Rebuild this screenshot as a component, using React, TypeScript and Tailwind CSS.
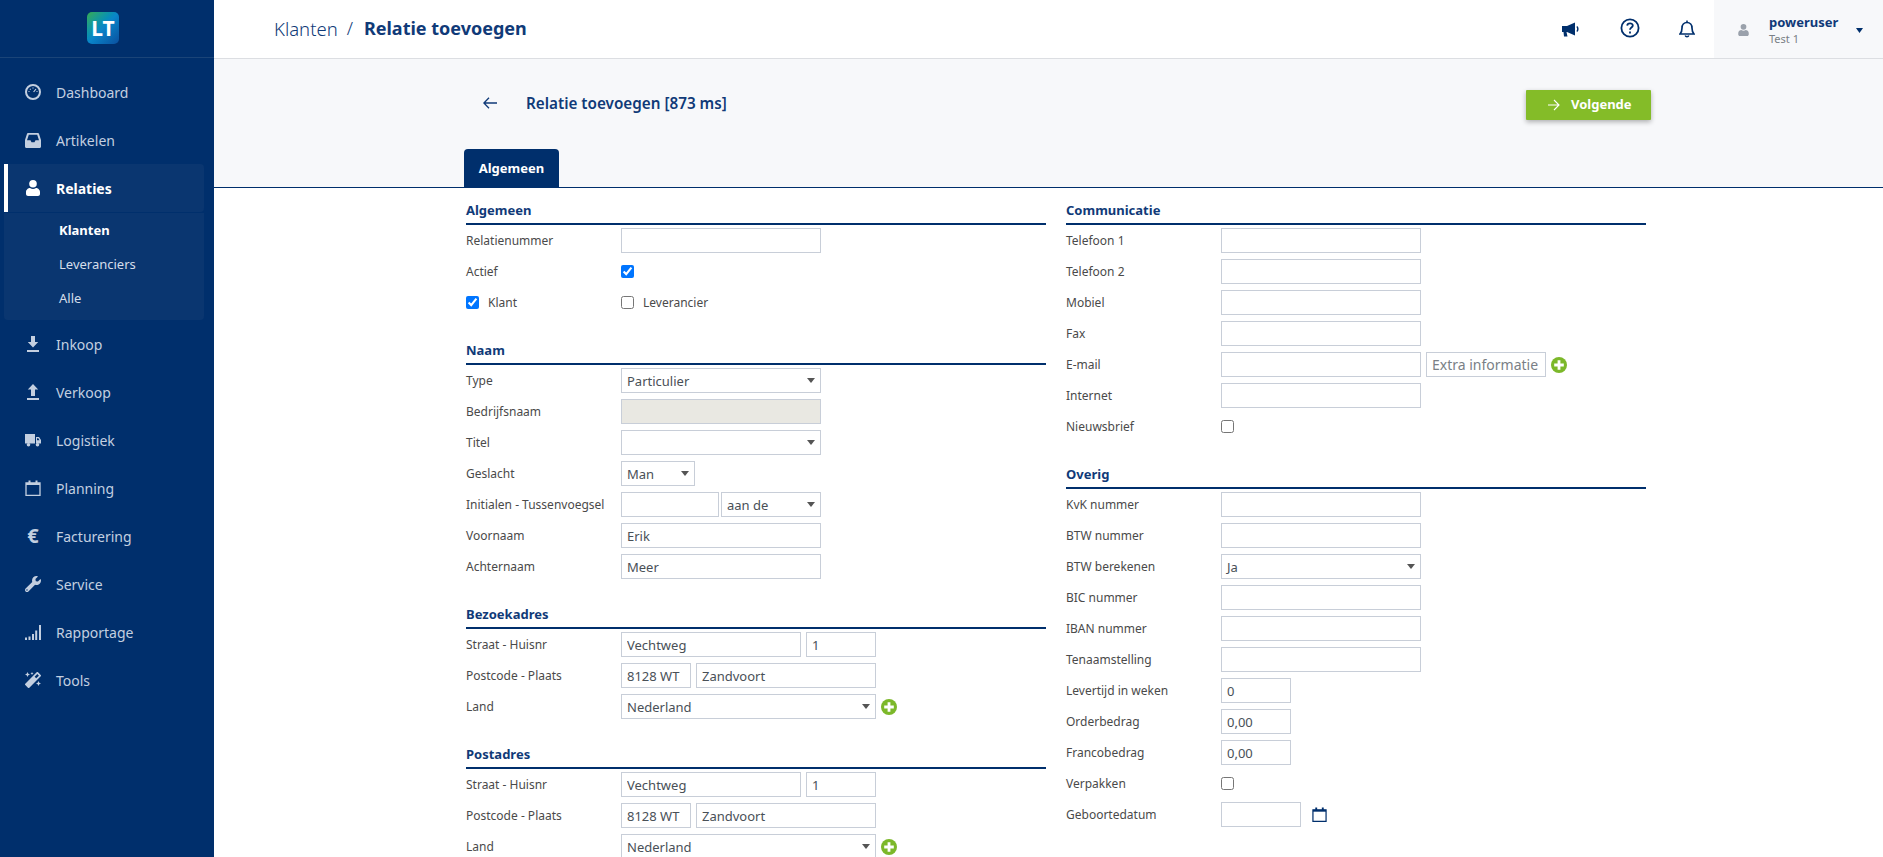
import React from "react";
import { FaWrench, FaMagic } from "react-icons/fa";

const font = "[font-family:'Noto_Sans','Open_Sans',sans-serif]";

const IconDash = () => (
  <svg width="16" height="16" viewBox="0 0 16 16" fill="none" stroke="currentColor">
    <circle cx="8" cy="8" r="7" strokeWidth="2" />
    <path d="M3.500 7.500h1M11.500 7.500h1M8 3.500v1M5 5l.6.6M11 5l-2.400 3" strokeWidth="1.200" />
  </svg>
);
const IconInbox = () => (
  <svg width="16" height="15" viewBox="0 0 16 15" fill="currentColor" fillRule="evenodd">
    <path d="M3 0h10c.4 0 .7.2.9.6L16 7v6.500c0 .8-.6 1.500-1.500 1.500h-13C.6 15 0 14.300 0 13.500V7L2.100.6C2.300.2 2.600 0 3 0zM3.800 1.800L2 7.300h3.500l1 2h3l1-2H14l-1.800-5.500z" />
  </svg>
);
const IconUser = ({ w, h }: { w: number; h: number }) => (
  <svg width={w} height={h} viewBox="0 0 14 16" fill="currentColor">
    <circle cx="7" cy="3.800" r="3.800" />
    <path d="M0 12c0-2.500 2.500-4 4-4 1 .7 2 1 3 1s2-.3 3-1c1.500 0 4 1.500 4 4v2c0 1.200-1 2-2 2H2c-1 0-2-.8-2-2z" />
  </svg>
);
const IconTruck = () => (
  <svg width="16" height="13" viewBox="0 0 16 13" fill="currentColor" fillRule="evenodd">
    <path d="M0 0h10v9.500H0zM11 3h3l2 3v3.500h-5zM12 4.200v2h2.500L13.300 4.200z" />
    <circle cx="3.500" cy="10.800" r="1.800" />
    <circle cx="12.500" cy="10.800" r="1.800" />
  </svg>
);
const IconDown = () => (
  <svg width="16" height="16" viewBox="0 0 16 16" fill="currentColor">
    <path d="M6 0h4v6h3.200L8 11.400 2.800 6H6zM2 14h12v2H2z" />
  </svg>
);
const IconUp = () => (
  <svg width="16" height="16" viewBox="0 0 16 16" fill="currentColor">
    <path d="M8 0l5.200 5.600H10v6.400H6V5.600H2.800zM2 14h12v2H2z" />
  </svg>
);
const IconCal = ({ s = 16 }: { s?: number }) => (
  <svg width={s} height={s} viewBox="0 0 16 16" fill="none" stroke="currentColor">
    <path d="M1 3h14v12.300H1z" strokeWidth="1.300" />
    <path d="M1 4h14" strokeWidth="2" />
    <path d="M4.500 .5v3M11.500 .5v3" strokeWidth="2" />
  </svg>
);
const IconBars = () => (
  <svg width="16" height="16" viewBox="0 0 16 16" fill="currentColor">
    <path d="M0 13.500h2V16H0zM3.500 12.500h2V16h-2zM7 10h2v6H7zM10.200 6.500h2V16h-2zM14 1h2v15h-2z" />
  </svg>
);
const Plus = () => (
  <svg width="16" height="16" viewBox="0 0 16 16" className="shrink-0">
    <circle cx="8" cy="8" r="8" fill="#7cb82a" />
    <path d="M6.600 3.200h2.800v3.400h3.400v2.800H9.400v3.400H6.600V9.400H3.200V6.600h3.400z" fill="#fff" />
  </svg>
);
const Caret = () => (
  <svg width="8" height="5" viewBox="0 0 8 5" className="absolute right-[5px] top-[9px]" fill="#555">
    <path d="M0 0h8L4 5z" />
  </svg>
);

type Item = { label: string; icon: React.ReactNode };
const top: Item[] = [
  { label: "Dashboard", icon: <IconDash /> },
  { label: "Artikelen", icon: <IconInbox /> },
];
const rest: Item[] = [
  { label: "Inkoop", icon: <IconDown /> },
  { label: "Verkoop", icon: <IconUp /> },
  { label: "Logistiek", icon: <IconTruck /> },
  { label: "Planning", icon: <IconCal /> },
  { label: "Facturering", icon: <span className="text-[20px] font-bold leading-none">€</span> },
  { label: "Service", icon: <FaWrench size={16} /> },
  { label: "Rapportage", icon: <IconBars /> },
  { label: "Tools", icon: <FaMagic size={16} /> },
];

const NavRow = ({ item }: { item: Item }) => (
  <div className="flex h-[48px] items-center pl-[25px] text-[14px] text-[#c3cfe0]">
    <span className="flex w-[16px] justify-center">{item.icon}</span>
    <span className="ml-[15px]">{item.label}</span>
  </div>
);

const Input = ({ w, value, placeholder, disabled }: { w: string; value?: string; placeholder?: string; disabled?: boolean }) => (
  <input
    defaultValue={value}
    placeholder={placeholder}
    disabled={disabled}
    className={`${w} h-[25px] border border-[#c8ced8] px-[5px] text-[13px] text-[#495057] outline-none placeholder:text-[14px] placeholder:text-[#7a7f86] disabled:bg-[#e9e8e2] ${font}`}
  />
);

const Select = ({ w, value }: { w: string; value: string }) => (
  <div className={`${w} relative h-[25px] border border-[#c8ced8] bg-white px-[5px] text-[13px] leading-[25px] text-[#495057]`}>
    {value}
    <Caret />
  </div>
);

const Row = ({ label, children }: { label: string; children?: React.ReactNode }) => (
  <div className="flex h-[25px] items-center">
    <span className="w-[155px] shrink-0 pt-[1px] text-[12px] text-[#4a4a4a]">{label}</span>
    {children}
  </div>
);

const Section = ({ title, children }: { title: string; children: React.ReactNode }) => (
  <section className="mb-[22px]">
    <h3 className="flex h-[28px] items-center border-b-2 border-[#002f6c] pt-[1px] text-[13px] font-bold text-[#103a78]">{title}</h3>
    <div className="mt-[3px] flex flex-col gap-[6px]">{children}</div>
  </section>
);

const Address = () => (
  <>
    <Row label="Straat - Huisnr">
      <div className="flex gap-[5px]">
        <Input w="w-[180px]" value="Vechtweg" />
        <Input w="w-[70px]" value="1" />
      </div>
    </Row>
    <Row label="Postcode - Plaats">
      <div className="flex gap-[5px]">
        <Input w="w-[70px]" value="8128 WT" />
        <Input w="w-[180px]" value="Zandvoort" />
      </div>
    </Row>
    <Row label="Land">
      <div className="flex items-center gap-[5px]">
        <Select w="w-[255px]" value="Nederland" />
        <Plus />
      </div>
    </Row>
  </>
);

export default function App() {
  return (
    <div className={`flex h-screen w-full overflow-hidden bg-white ${font}`}>
      <aside className="h-full w-[214px] shrink-0 bg-[#002f6c]">
        <div className="flex h-[58px] items-center justify-center border-b border-[#1a4478] pb-[1px] pr-[8px]">
          <div className="flex h-[32px] w-[32px] items-center justify-center rounded-[5px] bg-gradient-to-br from-[#37ab4b] via-[#0a85c9] to-[#0b4f9e] text-[21px] font-bold leading-none text-white">
            LT
          </div>
        </div>
        <nav className="pt-[10px]">
          {top.map((i) => (
            <NavRow key={i.label} item={i} />
          ))}
          <div className="ml-[4px] flex h-[48px] w-[200px] items-center rounded-r-[4px] border-l-[4px] border-white bg-[#0a3670] pl-[17px] text-[14px] font-bold text-white">
            <span className="flex w-[16px] justify-center">
              <IconUser w={14} h={16} />
            </span>
            <span className="ml-[15px]">Relaties</span>
          </div>
          <div className="ml-[4px] mt-[1px] h-[107px] w-[200px] rounded-b-[4px] bg-[#0a3670] pt-[1px] text-[13px] text-[#d5deea]">
            <div className="flex h-[34px] items-center pl-[55px] font-bold text-white">Klanten</div>
            <div className="flex h-[34px] items-center pl-[55px]">Leveranciers</div>
            <div className="flex h-[34px] items-center pl-[55px]">Alle</div>
          </div>
          {rest.map((i) => (
            <NavRow key={i.label} item={i} />
          ))}
        </nav>
      </aside>

      <main className="flex h-full min-w-0 flex-1 flex-col">
        <header className="flex h-[59px] shrink-0 items-center justify-between border-b border-[#dcdee2] pl-[60px]">
          <div className="flex items-center pb-[1px] text-[18px] text-[#103a78]">
            <span className="text-[18.500px] font-light">Klanten</span>
            <span className="ml-[9px] mr-[11px] font-light">/</span>
            <span className="font-bold">Relatie toevoegen</span>
          </div>
          <div className="flex h-full items-center">
            <svg width="18" height="15" viewBox="0 0 18 15" className="text-[#002f6c]" fill="currentColor">
              <path d="M0 4h5L13 .5v13L5 10h-.5l1 4.500H2L1.500 10H0z" />
              <path d="M14.800 4.500c1.400 1 1.400 4 0 5" fill="none" stroke="currentColor" strokeWidth="1.500" />
            </svg>
            <svg width="20" height="20" viewBox="0 0 20 20" fill="none" stroke="#002f6c" className="ml-[40px] mb-[3px]">
              <circle cx="10" cy="10" r="8.600" strokeWidth="1.800" />
              <path d="M7.200 7.600C7.400 4.600 12.800 4.600 12.800 7.600c0 2-2.800 2-2.800 4.200" strokeWidth="1.800" />
              <path d="M10 13.400v2" strokeWidth="1.800" />
            </svg>
            <svg width="16" height="18" viewBox="0 0 16 18" fill="none" stroke="#002f6c" className="ml-[39px]">
              <path d="M1 14h14c-1.500-1.500-2-2.500-2-6 0-3-2-5.500-5-5.500S3 5 3 8c0 3.500-.5 4.500-2 6z" strokeWidth="1.700" />
              <path d="M8 .5v2M6.200 15.500c.5 1.500 3.100 1.500 3.600 0" strokeWidth="1.500" />
            </svg>
            <div className="ml-[19px] flex h-full w-[169px] items-center bg-[#f7f8fa] pl-[24px]">
              <span className="mt-[1px] text-[#9aa1ab]">
                <IconUser w={11} h={12} />
              </span>
              <div className="ml-[20px] flex flex-col pt-[4px]">
                <span className="text-[13px] font-bold leading-[16px] text-[#103a78]">poweruser</span>
                <span className="text-[11px] leading-[18px] text-[#7a7f86]">Test 1</span>
              </div>
              <svg width="7" height="5" viewBox="0 0 7 5" fill="#002f6c" className="ml-[18px] mt-[2px]">
                <path d="M0 0h7L3.500 5z" />
              </svg>
            </div>
          </div>
        </header>

        <div className="h-[129px] shrink-0 border-b border-[#002f6c] bg-[#f7f8fa] pl-[250px] pt-[31px]">
          <div className="flex w-[1187px] items-start justify-between">
            <div className="flex h-[26px] items-center">
              <svg width="14" height="12" viewBox="0 0 14 12" fill="none" stroke="#103a78" strokeWidth="1.300" className="ml-[19px]">
                <path d="M14 6H1M6 .7L.9 6 6 11.300" />
              </svg>
              <span className="ml-[29px] text-[15.250px] font-semibold text-[#103a78]">Relatie toevoegen [873 ms]</span>
            </div>
            <button className="flex h-[30px] w-[125px] items-center rounded-[1px] bg-[#84bc28] pl-[22px] text-[13px] font-bold text-white shadow-[0_2px_5px_rgba(0,0,0,0.3)]">
              <svg width="12" height="12" viewBox="0 0 12 12" fill="none" stroke="#fff" strokeWidth="1.100" className="mr-[11px]">
                <path d="M0 6h11M6 1l5 5-5 5" />
              </svg>
              Volgende
            </button>
          </div>
          <div className="mt-[29px] flex h-[38px] w-[95px] items-center justify-center rounded-t-[4px] bg-[#002f6c] pt-[1px] text-[13px] font-bold text-white">
            Algemeen
          </div>
        </div>

        <div className="min-h-0 flex-1 pl-[252px] pt-[9px]">
          <div className="grid w-[1180px] grid-cols-[580px_580px] gap-x-[20px]">
            <div>
              <Section title="Algemeen">
                <Row label="Relatienummer">
                  <Input w="w-[200px]" />
                </Row>
                <Row label="Actief">
                  <input type="checkbox" defaultChecked className="m-0 h-[13px] w-[13px]" />
                </Row>
                <div className="flex h-[25px] items-center text-[12px] text-[#4a4a4a]">
                  <div className="flex w-[155px] items-center">
                    <input type="checkbox" defaultChecked className="m-0 h-[13px] w-[13px]" />
                    <span className="ml-[9px]">Klant</span>
                  </div>
                  <input type="checkbox" className="m-0 h-[13px] w-[13px]" />
                  <span className="ml-[9px]">Leverancier</span>
                </div>
              </Section>
              <Section title="Naam">
                <Row label="Type">
                  <Select w="w-[200px]" value="Particulier" />
                </Row>
                <Row label="Bedrijfsnaam">
                  <Input w="w-[200px]" disabled />
                </Row>
                <Row label="Titel">
                  <Select w="w-[200px]" value="" />
                </Row>
                <Row label="Geslacht">
                  <Select w="w-[74px]" value="Man" />
                </Row>
                <Row label="Initialen - Tussenvoegsel">
                  <div className="flex gap-[2px]">
                    <Input w="w-[98px]" />
                    <Select w="w-[100px]" value="aan de" />
                  </div>
                </Row>
                <Row label="Voornaam">
                  <Input w="w-[200px]" value="Erik" />
                </Row>
                <Row label="Achternaam">
                  <Input w="w-[200px]" value="Meer" />
                </Row>
              </Section>
              <Section title="Bezoekadres">
                <Address />
              </Section>
              <Section title="Postadres">
                <Address />
              </Section>
            </div>
            <div>
              <Section title="Communicatie">
                <Row label="Telefoon 1">
                  <Input w="w-[200px]" />
                </Row>
                <Row label="Telefoon 2">
                  <Input w="w-[200px]" />
                </Row>
                <Row label="Mobiel">
                  <Input w="w-[200px]" />
                </Row>
                <Row label="Fax">
                  <Input w="w-[200px]" />
                </Row>
                <Row label="E-mail">
                  <div className="flex items-center gap-[5px]">
                    <Input w="w-[200px]" />
                    <Input w="w-[120px]" placeholder="Extra informatie" />
                    <Plus />
                  </div>
                </Row>
                <Row label="Internet">
                  <Input w="w-[200px]" />
                </Row>
                <Row label="Nieuwsbrief">
                  <input type="checkbox" className="m-0 h-[13px] w-[13px]" />
                </Row>
              </Section>
              <Section title="Overig">
                <Row label="KvK nummer">
                  <Input w="w-[200px]" />
                </Row>
                <Row label="BTW nummer">
                  <Input w="w-[200px]" />
                </Row>
                <Row label="BTW berekenen">
                  <Select w="w-[200px]" value="Ja" />
                </Row>
                <Row label="BIC nummer">
                  <Input w="w-[200px]" />
                </Row>
                <Row label="IBAN nummer">
                  <Input w="w-[200px]" />
                </Row>
                <Row label="Tenaamstelling">
                  <Input w="w-[200px]" />
                </Row>
                <Row label="Levertijd in weken">
                  <Input w="w-[70px]" value="0" />
                </Row>
                <Row label="Orderbedrag">
                  <Input w="w-[70px]" value="0,00" />
                </Row>
                <Row label="Francobedrag">
                  <Input w="w-[70px]" value="0,00" />
                </Row>
                <Row label="Verpakken">
                  <input type="checkbox" className="m-0 h-[13px] w-[13px]" />
                </Row>
                <Row label="Geboortedatum">
                  <Input w="w-[80px]" />
                  <span className="ml-[11px] text-[#002f6c]">
                    <IconCal s={15} />
                  </span>
                </Row>
              </Section>
            </div>
          </div>
        </div>
      </main>
    </div>
  );
}
